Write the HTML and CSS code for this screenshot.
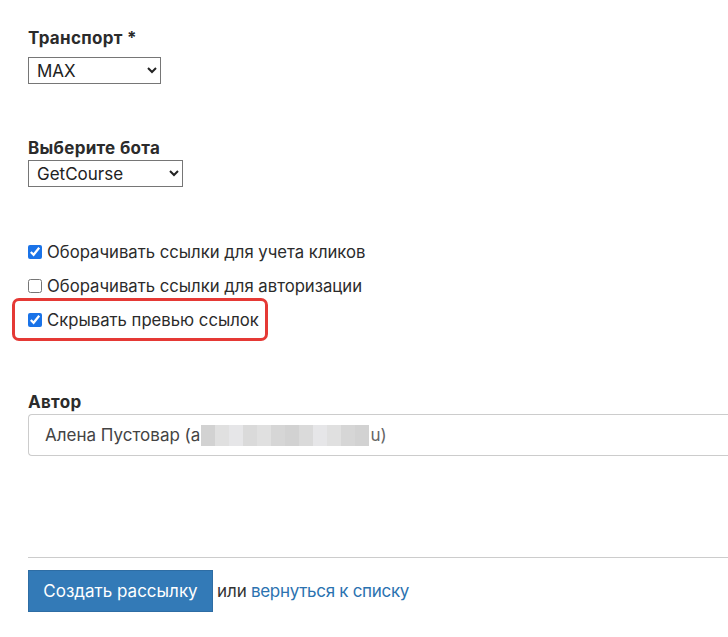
FILE: index.html
```html
<!DOCTYPE html>
<html lang="ru">
<head>
<meta charset="utf-8">
<title>Рассылка</title>
<link rel="stylesheet" href="styles.css">
</head>
<body>
<form class="form">
  <div class="field field-transport">
    <label class="label" for="transport">Транспорт *</label>
    <select id="transport" class="select select-transport">
      <option>MAX</option>
    </select>
  </div>

  <div class="field field-bot">
    <label class="label" for="bot">Выберите бота</label>
    <select id="bot" class="select select-bot">
      <option>GetCourse</option>
    </select>
  </div>

  <div class="checks">
    <label class="check"><input type="checkbox" checked><span>Оборачивать ссылки для учета кликов</span></label>
    <label class="check"><input type="checkbox"><span>Оборачивать ссылки для авторизации</span></label>
    <label class="check check-marked"><input type="checkbox" checked><span>Скрывать превью ссылок</span></label>
  </div>

  <div class="field field-author">
    <label class="label">Автор</label>
    <div class="author-box">
      <span class="author-text">Алена Пустовар (а</span><span class="blur"><i class="b1"></i><i class="b2"></i><i class="b3"></i><i class="b4"></i><i class="b2"></i><i class="b5"></i><i class="b1"></i><i class="b4"></i><i class="b3"></i><i class="b2"></i><i class="b5"></i><i class="b1"></i></span><span class="author-text tail">u)</span>
    </div>
  </div>

  <div class="divider"></div>

  <div class="actions">
    <button type="button" class="btn">Создать рассылку</button>
    <span class="or">или</span>
    <a class="back" href="#">вернуться к списку</a>
  </div>
</form>
</body>
</html>
```

FILE: styles.css
```css
html, body {
  margin: 0;
  padding: 0;
  background: #ffffff;
  overflow: hidden;
}

body {
  font-family: Inter, "Noto Sans", "Liberation Sans", sans-serif;
  font-size: 17px;
  line-height: 20px;
  color: #333333;
}

.form {
  padding: 28px 0 0 28px;
}

.field {
  display: flex;
  flex-direction: column;
  align-items: flex-start;
}

.label {
  font-weight: 700;
  color: #2b2b2b;
  line-height: 20px;
  letter-spacing: 0.3px;
}

.field-transport .label {
  margin-bottom: 9px;
}

.field-bot {
  margin-top: 54px;
}

.field-bot .label {
  margin-bottom: 2px;
}

.select {
  font-family: Inter, "Noto Sans", "Liberation Sans", sans-serif;
  font-size: 17px;
  height: 27px;
  color: #222222;
  background: #ffffff;
  border: 1px solid #767676;
  border-radius: 0;
  padding: 0 4px;
  margin: 0;
}

.select-transport {
  width: 133px;
}

.select-bot {
  width: 155px;
}

.checks {
  margin-top: 55px;
  display: flex;
  flex-direction: column;
  gap: 14px;
}

.check {
  display: flex;
  align-items: center;
  height: 20px;
  font-size: 16.7px;
  color: #2b2b2b;
}

.check input {
  width: 14px;
  height: 14px;
  margin: 0 5px 0 0;
  accent-color: #1a73e8;
}

.check-marked {
  position: relative;
  align-self: flex-start;
}

.check-marked::after {
  content: "";
  position: absolute;
  left: -16px;
  top: -12px;
  box-sizing: border-box;
  width: 256px;
  height: 43px;
  border: 3px solid #e53935;
  border-radius: 7px;
  pointer-events: none;
}

.field-author {
  margin-top: 62px;
}

.field-author .label {
  margin-bottom: 2px;
}

.author-box {
  box-sizing: border-box;
  width: 700px;
  height: 42px;
  border: 1px solid #cccccc;
  border-right: none;
  border-radius: 4px 0 0 4px;
  display: flex;
  align-items: center;
  padding-left: 16px;
  color: #444444;
}

.blur {
  display: flex;
  height: 21px;
  margin: 0 1px;
}

.blur i {
  display: block;
  width: 14px;
  height: 21px;
}

.blur .b1 { background: #d2d2d2; }
.blur .b2 { background: #e0e0e0; }
.blur .b3 { background: #e6e6e8; }
.blur .b4 { background: #dadada; }
.blur .b5 { background: #d6d6d6; }

.tail {
  color: #666666;
}

.divider {
  margin-top: 101px;
  width: 700px;
  height: 1px;
  background: #cccccc;
}

.actions {
  margin-top: 12px;
  display: flex;
  align-items: center;
}

.btn {
  font-family: Inter, "Noto Sans", "Liberation Sans", sans-serif;
  font-size: 17px;
  width: 185px;
  height: 42px;
  background: #337ab7;
  border: 1px solid #2e6da4;
  color: #ffffff;
  border-radius: 0;
  padding: 0;
  margin: 0;
}

.or {
  margin-left: 4px;
  color: #333333;
}

.back {
  margin-left: 4px;
  color: #2b72b0;
  text-decoration: none;
  letter-spacing: -0.3px;
}
```
